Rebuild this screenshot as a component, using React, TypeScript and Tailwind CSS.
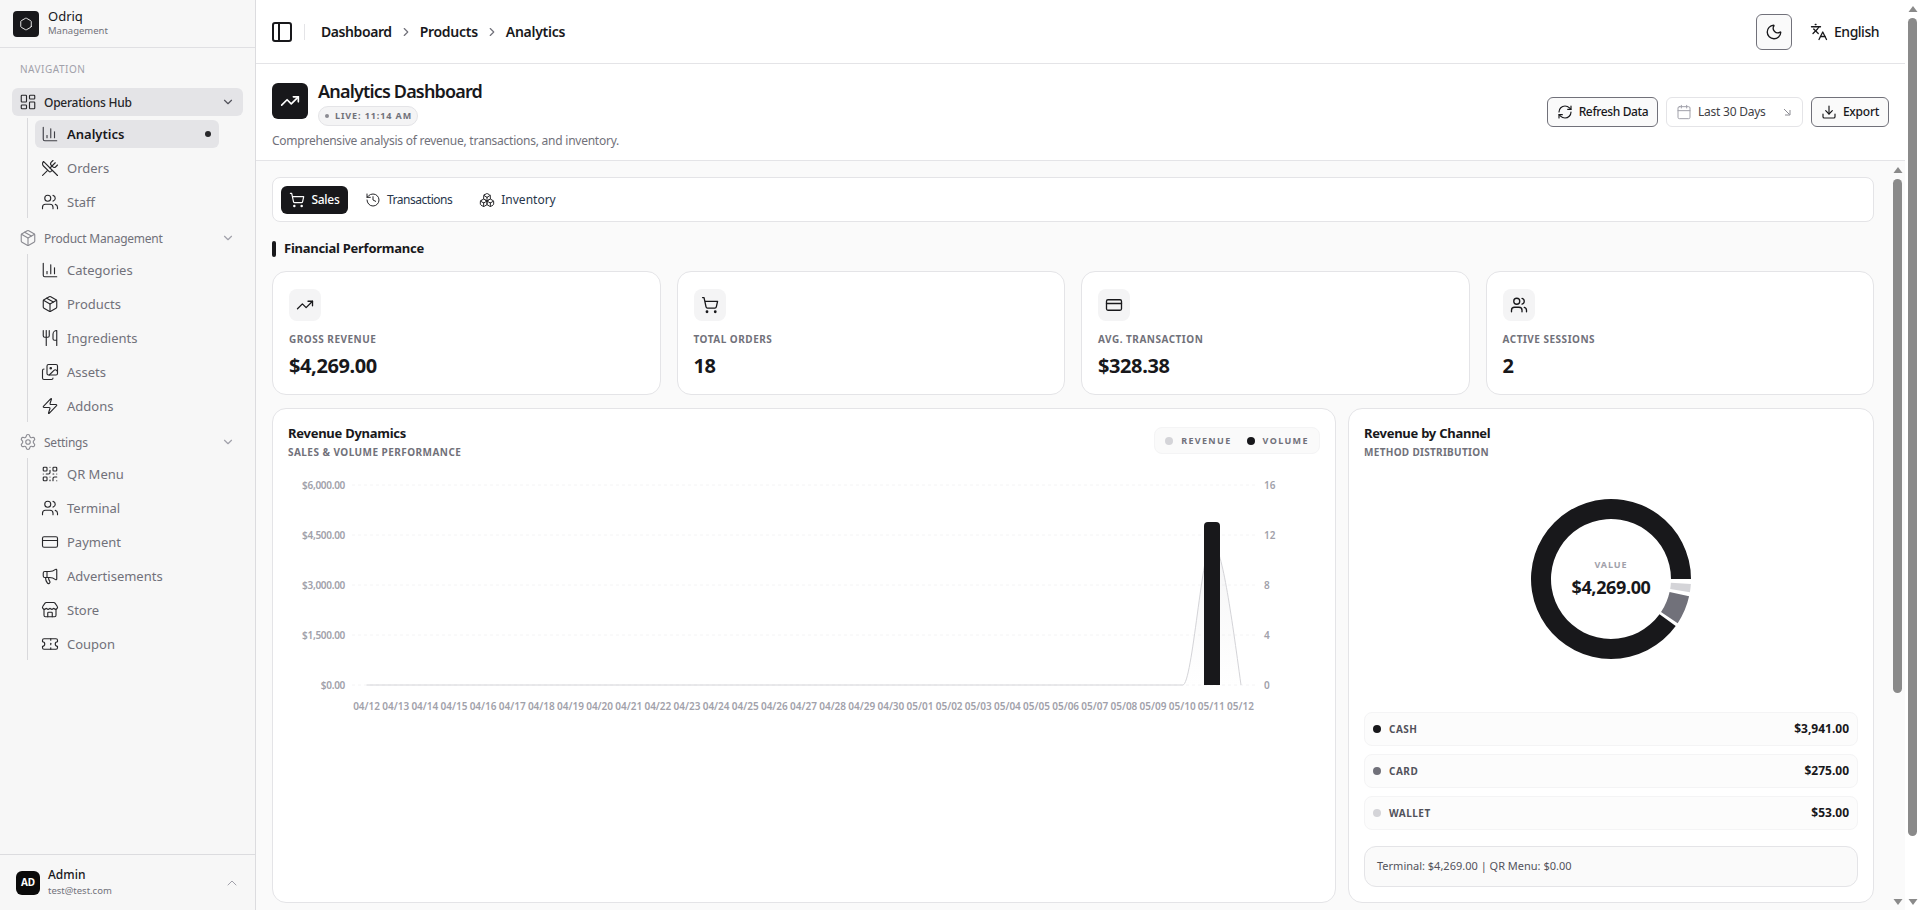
import {
  Boxes,
  Calendar,
  ChartColumn,
  ChevronDown,
  ChevronRight,
  ChevronUp,
  CreditCard,
  Download,
  Hexagon,
  History,
  Images,
  Languages,
  LayoutDashboard,
  Megaphone,
  Moon,
  Package,
  PanelLeft,
  QrCode,
  RefreshCw,
  Settings,
  ShoppingCart,
  Store,
  Ticket,
  TrendingUp,
  Users,
  Utensils,
  UtensilsCrossed,
  Zap,
} from "lucide-react";
import React from "react";

type Item = { label: string; icon: React.ElementType; active?: boolean };

const groups: { label: string; icon: React.ElementType; open?: boolean; items: Item[] }[] = [
  {
    label: "Operations Hub",
    icon: LayoutDashboard,
    open: true,
    items: [
      { label: "Analytics", icon: ChartColumn, active: true },
      { label: "Orders", icon: UtensilsCrossed },
      { label: "Staff", icon: Users },
    ],
  },
  {
    label: "Product Management",
    icon: Package,
    items: [
      { label: "Categories", icon: ChartColumn },
      { label: "Products", icon: Package },
      { label: "Ingredients", icon: Utensils },
      { label: "Assets", icon: Images },
      { label: "Addons", icon: Zap },
    ],
  },
  {
    label: "Settings",
    icon: Settings,
    items: [
      { label: "QR Menu", icon: QrCode },
      { label: "Terminal", icon: Users },
      { label: "Payment", icon: CreditCard },
      { label: "Advertisements", icon: Megaphone },
      { label: "Store", icon: Store },
      { label: "Coupon", icon: Ticket },
    ],
  },
];

const stats = [
  { label: "GROSS REVENUE", value: "$4,269.00", icon: TrendingUp },
  { label: "TOTAL ORDERS", value: "18", icon: ShoppingCart },
  { label: "AVG. TRANSACTION", value: "$328.38", icon: CreditCard },
  { label: "ACTIVE SESSIONS", value: "2", icon: Users },
];

const channels = [
  { label: "CASH", value: "$3,941.00", dot: "bg-[#18181b]" },
  { label: "CARD", value: "$275.00", dot: "bg-[#71717a]" },
  { label: "WALLET", value: "$53.00", dot: "bg-[#d4d4d8]" },
];

const dates = [
  ...Array.from({ length: 19 }, (_, i) => `04/${12 + i}`),
  ...Array.from({ length: 12 }, (_, i) => `05/${String(i + 1).padStart(2, "0")}`),
];

function Sidebar() {
  return (
    <aside className="flex h-full w-64 shrink-0 flex-col border-r border-[#dcdcdf] bg-[#f7f7f7]">
      <div className="flex h-12 shrink-0 items-center gap-[9px] border-b border-[#e0e0e3] pl-[13px]">
        <div className="flex h-[26px] w-[26px] items-center justify-center rounded-[4px] bg-[#18181b] text-white">
          <Hexagon size={14} strokeWidth={1.5} />
        </div>
        <div className="flex flex-col pb-0.5">
          <span className="text-[13px] leading-4 text-[#18181b]">Odriq</span>
          <span className="text-[9.5px] leading-[14px] text-[#71717a]">Management</span>
        </div>
      </div>
      <div className="flex-1 px-3">
        <p className="pl-2 pt-[14px] text-[10px] leading-[14px] tracking-[0.05em] text-[#a1a1aa]">NAVIGATION</p>
        <div className="mt-[12px] flex flex-col gap-1.5">
          {groups.map((g) => (
            <div key={g.label}>
              <div
                className={`flex h-7 items-center rounded-md pl-[7px] pr-2 text-xs tracking-[-0.02em] ${
                  g.open ? "bg-[#e4e4e7] font-medium text-[#27272a]" : "text-[#71717a]"
                }`}
              >
                <g.icon size={18} strokeWidth={1.5} className={g.open ? "text-[#27272a]" : "text-[#8b8b92]"} />
                <span className="ml-[7px] flex-1 pt-0.5">{g.label}</span>
                <ChevronDown size={14} className={g.open ? "text-[#52525b]" : "text-[#a1a1aa]"} />
              </div>
              <div className="ml-[15px] mt-0.5 flex flex-col gap-1.5 border-l border-[#d9d9dc] py-0.5 pl-[7px] pr-6">
                {g.items.map((it) => (
                  <div
                    key={it.label}
                    className={`flex h-7 items-center gap-2 rounded-md pl-[6px] pr-2 text-[13px] ${
                      it.active ? "bg-[#e4e4e7] font-semibold text-[#18181b]" : "text-[#71717a]"
                    }`}
                  >
                    <it.icon size={18} strokeWidth={1.5} className={it.active ? "text-[#3f3f46]" : "text-[#27272a]"} />
                    <span className="flex-1 pt-0.5">{it.label}</span>
                    {it.active && <span className="h-1.5 w-1.5 rounded-full bg-[#27272a]" />}
                  </div>
                ))}
              </div>
            </div>
          ))}
        </div>
      </div>
      <div className="flex h-14 shrink-0 items-center gap-2 border-t border-[#dcdcdf] pl-4 pr-[15px]">
        <div className="flex h-6 w-6 items-center justify-center rounded-md bg-[#0a0a0a] text-[10px] font-bold text-white">AD</div>
        <div className="flex flex-1 flex-col">
          <span className="text-xs font-medium leading-[14px] text-[#18181b]">Admin</span>
          <span className="mt-0.5 text-[9.5px] leading-[14px] text-[#71717a]">test@test.com</span>
        </div>
        <ChevronUp size={16} strokeWidth={1.5} className="text-[#a1a1aa]" />
      </div>
    </aside>
  );
}

function TopBar() {
  return (
    <header className="flex h-16 shrink-0 items-center border-b border-[#e4e4e7] bg-white pl-4 pr-[10px]">
      <PanelLeft size={24} strokeWidth={2} className="-ml-0.5 text-[#18181b]" />
      <div className="ml-[10px] h-4 w-px bg-[#e4e4e7]" />
      <nav className="ml-4 flex items-center text-sm font-semibold tracking-[-0.02em] text-[#18181b]">
        <span className="tracking-[-0.03em]">Dashboard</span>
        <ChevronRight size={14} className="mx-[7px] text-[#71717a]" />
        <span>Products</span>
        <ChevronRight size={14} className="mx-[7px] text-[#71717a]" />
        <span>Analytics</span>
      </nav>
      <div className="ml-auto flex items-center">
        <div className="flex h-9 w-9 items-center justify-center rounded-md border border-[#71717a] bg-[#fafafa]">
          <Moon size={18} strokeWidth={1.75} className="text-[#18181b]" />
        </div>
        <div className="ml-[18px] mr-4 flex items-center gap-1.5 text-sm font-medium tracking-[-0.035em] text-[#18181b]">
          <Languages size={18} strokeWidth={1.75} />
          <span>English</span>
        </div>
      </div>
    </header>
  );
}

function PageHeader() {
  return (
    <section className="flex h-[97px] shrink-0 items-center justify-between border-b border-[#e4e4e7] bg-white px-4">
      <div className="self-start pt-[19px]">
        <div className="flex items-start gap-2.5">
          <div className="flex h-9 w-9 items-center justify-center rounded-md bg-[#18181b] text-white">
            <TrendingUp size={20} />
          </div>
          <div>
            <h1 className="text-lg font-semibold leading-4 tracking-[-0.046em] text-[#18181b]">Analytics Dashboard</h1>
            <div className="mt-[7px] flex h-5 w-[100px] items-center gap-1.5 rounded-full border border-[#e4e4e7] bg-[#f4f4f5] pl-[6px]">
              <span className="h-1 w-1 rounded-full bg-[#8b8b92]" />
              <span className="text-[9px] font-bold tracking-[0.1em] text-[#71717a]">LIVE: 11:14 AM</span>
            </div>
          </div>
        </div>
        <p className="mt-[7px] text-xs leading-4 tracking-[-0.02em] text-[#71717a]">Comprehensive analysis of revenue, transactions, and inventory.</p>
      </div>
      <div className="flex items-center gap-2 text-xs font-medium tracking-[-0.02em] text-[#18181b]">
        <div className="flex h-[30px] w-[111px] items-center justify-center gap-1.5 rounded-md border border-[#71717a] bg-[#fafafa] tracking-[-0.03em]">
          <RefreshCw size={16} strokeWidth={1.75} />
          <span>Refresh Data</span>
        </div>
        <div className="flex h-[30px] w-[137px] items-center rounded-md border border-[#e4e4e7] bg-white pl-[9px] pr-[11px] font-normal text-[#3f3f46]">
          <Calendar size={16} strokeWidth={1.5} className="text-[#a1a1aa]" />
          <span className="ml-1.5 flex-1">Last 30 Days</span>
          <svg width="8" height="8" viewBox="0 0 8 8" fill="none" stroke="#8b8b92" strokeWidth="1">
            <path d="M1 1 L6.5 6.5 M7 2 V7 H2" />
          </svg>
        </div>
        <div className="flex h-[30px] w-[78px] items-center justify-center gap-1.5 rounded-md border border-[#71717a] bg-[#fafafa]">
          <Download size={16} strokeWidth={1.75} />
          <span>Export</span>
        </div>
      </div>
    </section>
  );
}

function Tabs() {
  return (
    <div className="flex h-[45px] items-center gap-[2px] rounded-lg border border-[#e4e4e7] bg-white pl-2 text-xs">
      <div className="flex h-7 w-[67px] items-center justify-center gap-1.5 rounded-md bg-[#18181b] font-medium tracking-[-0.02em] text-white">
        <ShoppingCart size={16} strokeWidth={1.75} />
        <span>Sales</span>
      </div>
      <div className="flex h-7 items-center gap-1.5 pl-[15px] pr-[13px] tracking-[-0.04em] text-[#27364b]">
        <History size={16} strokeWidth={1.5} className="text-[#27272a]" />
        <span>Transactions</span>
      </div>
      <div className="flex h-7 items-center gap-1.5 pl-3 text-[#27364b]">
        <Boxes size={16} strokeWidth={1.5} className="text-[#27272a]" />
        <span>Inventory</span>
      </div>
    </div>
  );
}

function StatCard({ label, value, icon: Icon }: { label: string; value: string; icon: React.ElementType }) {
  return (
    <div className="h-[124px] rounded-[14px] border border-[#e4e4e7] bg-white px-4 pt-[17px]">
      <div className="flex h-8 w-8 items-center justify-center rounded-lg bg-[#f4f4f5]">
        <Icon size={18} strokeWidth={1.75} className="text-[#18181b]" />
      </div>
      <p className="mt-[11px] text-[10px] font-bold leading-[14px] tracking-[0.05em] text-[#71717a]">{label}</p>
      <p className="mt-[6px] text-xl font-bold leading-7 tracking-[-0.02em] text-[#18181b]">{value}</p>
    </div>
  );
}

function RevenueChart() {
  const left = 352;
  const step = (1255 - 352) / 31;
  const rows = [
    { y: 485, l: "$6,000.00", r: "16" },
    { y: 535, l: "$4,500.00", r: "12" },
    { y: 585, l: "$3,000.00", r: "8" },
    { y: 635, l: "$1,500.00", r: "4" },
    { y: 685, l: "$0.00", r: "0" },
  ];
  const curve = "M366.6 685 H1182.8 C1192.5 685 1202.2 543 1211.9 543 C1221.6 543 1231.3 614 1241 685";
  return (
    <svg width="1032" height="250" viewBox="288 470 1032 250" className="mt-[13px] block">
      <defs>
        <linearGradient id="rev" x1="0" y1="0" x2="0" y2="1">
          <stop offset="0%" stopColor="#d4d4d8" stopOpacity="0.25" />
          <stop offset="100%" stopColor="#d4d4d8" stopOpacity="0" />
        </linearGradient>
      </defs>
      {rows.map((r) => (
        <g key={r.y}>
          <line x1={left} x2={1255} y1={r.y} y2={r.y} stroke="#f4f4f5" strokeDasharray="3 3" />
          <text x={345} y={r.y + 4} textAnchor="end" fontSize="10" fontWeight="600" letterSpacing="-0.3" fill="#a1a1aa">
            {r.l}
          </text>
          <text x={1264} y={r.y + 4} fontSize="10" fontWeight="600" fill="#a1a1aa">
            {r.r}
          </text>
        </g>
      ))}
      <path d={`${curve} Z`} fill="url(#rev)" />
      <path d={curve} fill="none" stroke="#d4d4d8" />
      <path d="M1204 685 V526 a4 4 0 0 1 4 -4 h8 a4 4 0 0 1 4 4 V685 Z" fill="#18181b" />
      {dates.map((d, i) => (
        <text key={d} x={left + step * (i + 0.5)} y={710} textAnchor="middle" fontSize="10" fontWeight="600" fill="#a1a1aa">
          {d}
        </text>
      ))}
    </svg>
  );
}

function polar(r: number, deg: number) {
  const a = (deg * Math.PI) / 180;
  return [100 + r * Math.cos(a), 100 - r * Math.sin(a)];
}

function arc(from: number, to: number) {
  const [x1, y1] = polar(80, from);
  const [x2, y2] = polar(80, to);
  const [x3, y3] = polar(60, to);
  const [x4, y4] = polar(60, from);
  const big = to - from > 180 ? 1 : 0;
  return `M${x1} ${y1} A80 80 0 ${big} 0 ${x2} ${y2} L${x3} ${y3} A60 60 0 ${big} 1 ${x4} ${y4} Z`;
}

function Donut() {
  return (
    <div className="relative flex h-[244px] items-center justify-center">
      <svg width="200" height="200" viewBox="0 0 200 200">
        <path d={arc(0, 324)} fill="#18181b" />
        <path d={arc(326.5, 347.5)} fill="#71717a" />
        <path d={arc(350.5, 356.5)} fill="#d4d4d8" />
      </svg>
      <div className="absolute inset-0 flex flex-col items-center justify-center">
        <span className="text-[9px] font-bold leading-3 tracking-[0.1em] text-[#a1a1aa]">VALUE</span>
        <span className="mt-1 text-lg font-bold leading-6 tracking-[-0.02em] text-[#18181b]">$4,269.00</span>
      </div>
    </div>
  );
}

function ScrollBar({ thumb, className }: { thumb: string; className: string }) {
  return (
    <div className={`flex shrink-0 flex-col items-center ${className}`}>
      <svg width="10" height="8" viewBox="0 0 10 8" className="mt-[5px]">
        <polygon points="5,1 9.5,7 0.5,7" fill="#8a8a8a" />
      </svg>
      <div className={`mt-[5px] w-[9px] rounded-full bg-[#8a8a8a] ${thumb}`} />
      <svg width="10" height="8" viewBox="0 0 10 8" className="mb-[4px] mt-auto">
        <polygon points="0.5,1 9.5,1 5,7" fill="#8a8a8a" />
      </svg>
    </div>
  );
}

export default function App() {
  return (
    <div className="flex h-[910px] overflow-hidden bg-white font-['Noto_Sans',sans-serif] text-[#18181b]">
      <Sidebar />
      <div className="flex min-w-0 flex-1 flex-col">
        <TopBar />
        <PageHeader />
        <div className="flex min-h-0 flex-1">
          <main className="min-w-0 flex-1 bg-[#fafafa] px-4 pt-4">
            <Tabs />
            <div className="mt-[19px] flex h-4 items-center gap-2">
              <span className="h-4 w-1 rounded-full bg-[#18181b]" />
              <h2 className="text-[13px] font-bold tracking-[-0.02em] text-[#18181b]">Financial Performance</h2>
            </div>
            <div className="mt-[14px] grid grid-cols-4 gap-4">
              {stats.map((s) => (
                <StatCard key={s.label} {...s} />
              ))}
            </div>
            <div className="mt-[13px] flex gap-3">
              <div className="h-[495px] w-[1064px] shrink-0 rounded-[14px] border border-[#e4e4e7] bg-white pl-[15px] pr-[15px] pt-4">
                <div className="flex h-8 items-start justify-between">
                  <div>
                    <h3 className="text-[13px] font-bold leading-4 tracking-[-0.02em] text-[#18181b]">Revenue Dynamics</h3>
                    <p className="mt-[5px] text-[10px] font-bold leading-3 tracking-[0.045em] text-[#71717a]">SALES &amp; VOLUME PERFORMANCE</p>
                  </div>
                  <div className="mt-0.5 flex h-[27px] w-[166px] items-center justify-center gap-[15px] rounded-lg border border-[#f4f4f5] bg-[#fafafa] text-[9px] font-bold tracking-[0.15em] text-[#71717a]">
                    <span className="flex items-center gap-2">
                      <span className="h-2 w-2 rounded-full bg-[#d4d4d8]" />
                      REVENUE
                    </span>
                    <span className="flex items-center gap-2">
                      <span className="h-2 w-2 rounded-full bg-[#18181b]" />
                      VOLUME
                    </span>
                  </div>
                </div>
                <RevenueChart />
              </div>
              <div className="h-[495px] flex-1 rounded-[14px] border border-[#e4e4e7] bg-white px-[15px] pt-4">
                <h3 className="text-[13px] font-bold leading-4 tracking-[-0.02em] text-[#18181b]">Revenue by Channel</h3>
                <p className="mt-[5px] text-[10px] font-bold leading-3 tracking-[0.03em] text-[#71717a]">METHOD DISTRIBUTION</p>
                <div className="-mt-px">
                  <Donut />
                </div>
                <div className="mt-[11px] flex flex-col gap-2">
                  {channels.map((c) => (
                    <div key={c.label} className="flex h-[34px] items-center rounded-lg border border-[#f4f4f5] bg-[#fcfcfc] px-2">
                      <span className={`h-2 w-2 rounded-full ${c.dot}`} />
                      <span className="ml-2 flex-1 text-[10px] font-bold tracking-[0.05em] text-[#52525b]">{c.label}</span>
                      <span className="text-xs font-bold text-[#18181b]">{c.value}</span>
                    </div>
                  ))}
                </div>
                <div className="mt-4 flex h-[41px] items-center rounded-xl border border-[#e4e4e7] bg-[#fafafa] px-3 text-[11px] text-[#52525b]">
                  Terminal: $4,269.00 | QR Menu: $0.00
                </div>
              </div>
            </div>
          </main>
          <ScrollBar thumb="h-[514px]" className="w-[15px] bg-[#fafafa]" />
        </div>
      </div>
      <ScrollBar thumb="h-[818px]" className="w-[15px] bg-white" />
    </div>
  );
}
